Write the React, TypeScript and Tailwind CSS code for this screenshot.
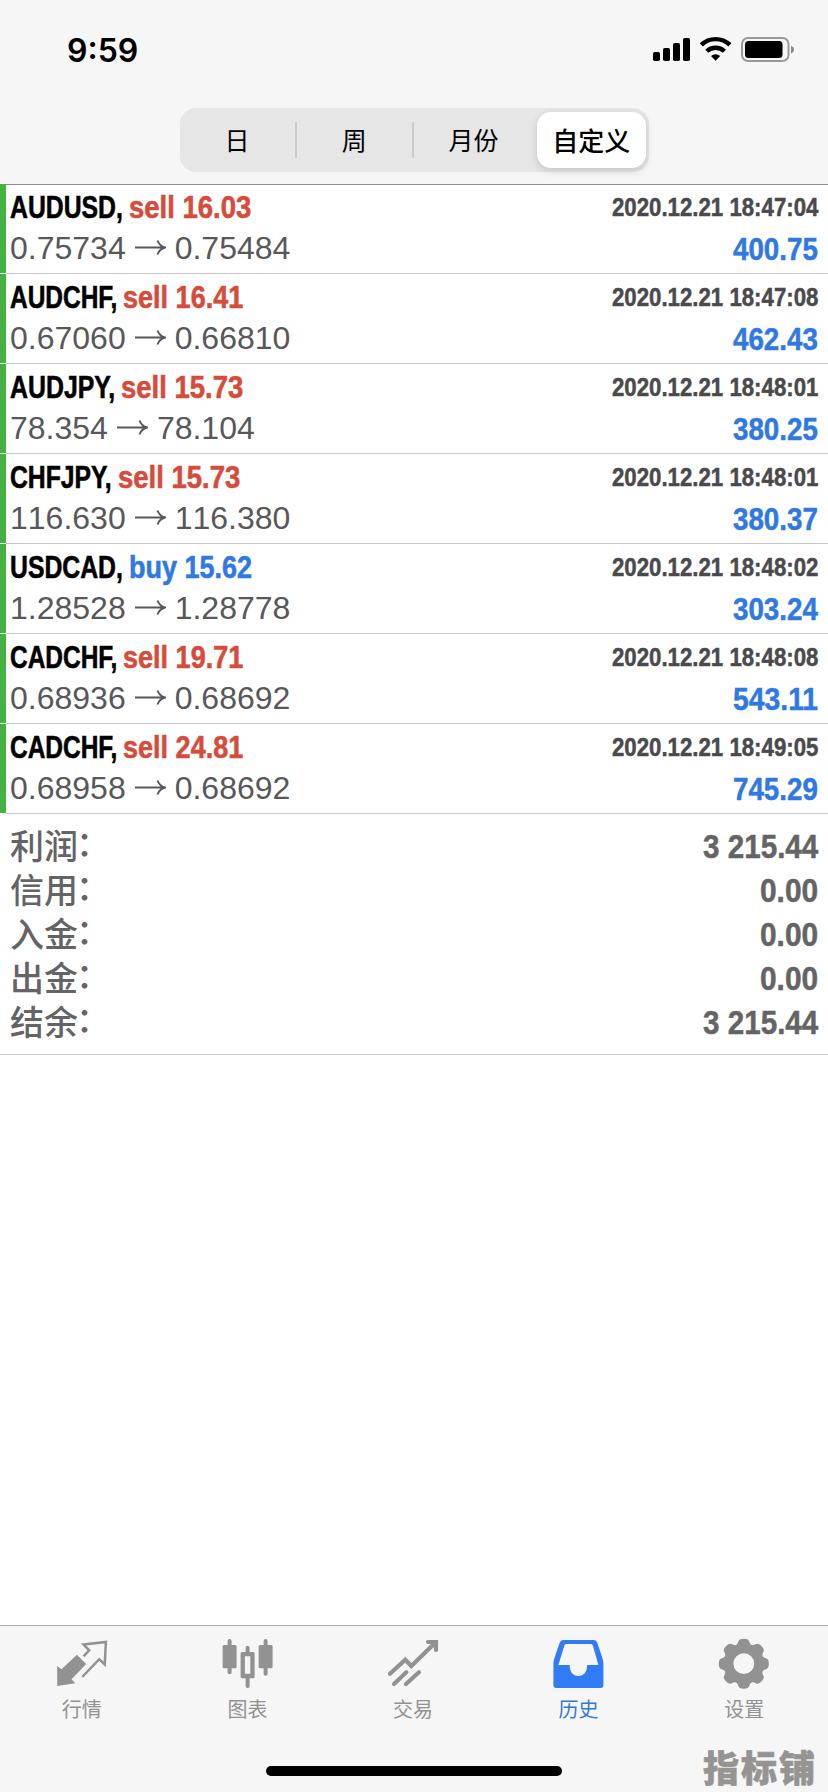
import { useLayoutEffect, useRef, useState } from 'react'
import type { ReactNode } from 'react'

type Deal = {
  symbol: string
  symbolWidth: number
  side: 'sell' | 'buy'
  volume: string
  volumeWidth: number
  open: string
  close: string
  time: string
  profit: string
}

const deals: Deal[] = [
  { symbol: 'AUDUSD', symbolWidth: 113, side: 'sell', volume: '16.03', volumeWidth: 122, open: '0.75734', close: '0.75484', time: '2020.12.21 18:47:04', profit: '400.75' },
  { symbol: 'AUDCHF', symbolWidth: 107, side: 'sell', volume: '16.41', volumeWidth: 120, open: '0.67060', close: '0.66810', time: '2020.12.21 18:47:08', profit: '462.43' },
  { symbol: 'AUDJPY', symbolWidth: 105, side: 'sell', volume: '15.73', volumeWidth: 122, open: '78.354', close: '78.104', time: '2020.12.21 18:48:01', profit: '380.25' },
  { symbol: 'CHFJPY', symbolWidth: 102, side: 'sell', volume: '15.73', volumeWidth: 122, open: '116.630', close: '116.380', time: '2020.12.21 18:48:01', profit: '380.37' },
  { symbol: 'USDCAD', symbolWidth: 113, side: 'buy', volume: '15.62', volumeWidth: 123, open: '1.28528', close: '1.28778', time: '2020.12.21 18:48:02', profit: '303.24' },
  { symbol: 'CADCHF', symbolWidth: 107, side: 'sell', volume: '19.71', volumeWidth: 120, open: '0.68936', close: '0.68692', time: '2020.12.21 18:48:08', profit: '543.11' },
  { symbol: 'CADCHF', symbolWidth: 107, side: 'sell', volume: '24.81', volumeWidth: 120, open: '0.68958', close: '0.68692', time: '2020.12.21 18:49:05', profit: '745.29' },
]

const summary = [
  { label: '利润', value: '3 215.44', width: 115 },
  { label: '信用', value: '0.00', width: 58 },
  { label: '入金', value: '0.00', width: 58 },
  { label: '出金', value: '0.00', width: 58 },
  { label: '结余', value: '3 215.44', width: 115 },
]

// Condenses its text horizontally to the given width
function Condensed({ width, className = '', children }: { width: number; className?: string; children: ReactNode }) {
  const ref = useRef<HTMLSpanElement>(null)
  const [scale, setScale] = useState(1)

  useLayoutEffect(() => {
    if (ref.current) setScale(width / ref.current.offsetWidth)
  }, [width])

  return (
    <span className={`block whitespace-nowrap ${className}`} style={{ width }}>
      <span ref={ref} className="inline-block origin-left" style={{ transform: `scaleX(${scale})` }}>
        {children}
      </span>
    </span>
  )
}

function StatusBar() {
  return (
    <div className="flex h-[108px] items-start justify-between pt-[30px] pr-[32px] pl-[67px]">
      <Condensed width={71} className="font-['Inter'] text-[32px] leading-[41px] font-semibold text-black">
        9:59
      </Condensed>
      <svg width="144" height="40" viewBox="0 0 144 40">
        <g>
          <rect x="1" y="22" width="7" height="9" rx="1.800" />
          <rect x="11" y="18" width="7" height="13" rx="1.800" />
          <rect x="21" y="13" width="7" height="18" rx="1.800" />
          <rect x="31" y="8" width="7" height="23" rx="1.800" />
        </g>
        <g fill="none" stroke="#000" strokeWidth="4.400">
          <path d="M49.300 14.900a20.500 20.500 0 0 1 28.600 0" />
          <path d="M54.800 21.300a12.600 12.600 0 0 1 17.600 0" />
        </g>
        <path d="M63.600 30.800l-4.600-4.700a6.600 6.600 0 0 1 9.200 0z" />
        <rect x="90" y="8" width="46.500" height="23" rx="6" fill="none" stroke="#999" strokeWidth="2" />
        <rect x="93" y="11" width="37.500" height="17" rx="3.500" />
        <path d="M139 15.700c2 .8 3 2.200 3 3.900s-1 3.100-3 3.900z" fill="#888" />
      </svg>
    </div>
  )
}

function PeriodTabs() {
  return (
    <div className="mx-auto grid h-16 w-[469px] grid-cols-4 items-center rounded-[16px] bg-[#e6e6e7] text-center font-['Noto_Sans_CJK_SC',sans-serif] text-[25px] text-black">
      <span className="border-r-2 border-[#cbcbd0] pb-0.5 leading-[34px]">日</span>
      <span className="border-r-2 border-[#cbcbd0] pb-0.5 leading-[34px]">周</span>
      <span className="pb-0.5 pl-0.5 leading-[34px]">月份</span>
      <span className="mr-[3px] ml-[6px] flex h-14 items-center justify-center rounded-[14px] bg-white pb-0.5 text-[26px] font-medium shadow-[0_3px_8px_rgba(0,0,0,0.14)]">
        自定义
      </span>
    </div>
  )
}

function DealRow({ deal }: { deal: Deal }) {
  return (
    <div className="flex h-[90px] font-['Liberation_Sans',sans-serif]">
      <div className="h-[89px] w-1.5 bg-[#45b143]" />
      <div className="flex flex-1 justify-between border-b border-[#c4c6c8] pr-[10px] pl-1">
        <div>
          <div className="flex h-11 gap-[6px] text-[32px] leading-[46px] font-bold [-webkit-text-stroke:0.6px]">
            <Condensed width={deal.symbolWidth} className="text-black">{deal.symbol},</Condensed>
            <Condensed width={deal.volumeWidth} className={deal.side === 'sell' ? 'text-[#d54c3c]' : 'text-[#3079e2]'}>
              {deal.side} {deal.volume}
            </Condensed>
          </div>
          <div className="flex text-[32px] leading-[40px] text-[#58585a] [font-kerning:none]">
            <span>{deal.open}</span>
            <svg width="31" height="40" viewBox="0 0 31 40" fill="none" stroke="#58585a" strokeWidth="2" className="mr-[9px] ml-[9px]">
              <path d="M0 19.500h29.500M22.500 12.500q2 5.500 7.500 7q-5.500 1.500-7.500 7" />
            </svg>
            <span>{deal.close}</span>
          </div>
        </div>
        <div className="flex flex-col items-end font-bold [-webkit-text-stroke:0.5px]">
          <Condensed width={206} className="text-[26px] leading-[46px] text-[#4a4a4c]">{deal.time}</Condensed>
          <Condensed width={85} className="text-[32px] leading-[38px] text-[#3079e2]">{deal.profit}</Condensed>
        </div>
      </div>
    </div>
  )
}

function QuotesIcon() {
  return (
    <svg width="60" height="56" viewBox="0 0 60 56">
      <path d="M4.200 31v20l18-2.700-3.700-4L33.200 29 23.900 19.700 8.500 34.300z" fill="#929292" />
      <path d="M30.500 21.300l5.700-6-5.600-5.800L52.900 7l-1.200 22.500-5.500-5.300L29.200 42" fill="none" stroke="#929292" strokeWidth="2.500" />
    </svg>
  )
}

function ChartIcon() {
  return (
    <svg width="60" height="56" viewBox="0 0 60 56" fill="#929292">
      <rect x="4.600" y="10" width="14" height="23.300" rx="1.500" />
      <rect x="9.600" y="4" width="4" height="35.300" rx="2" />
      <path fillRule="evenodd" d="M24.100 17h11a1.500 1.500 0 0 1 1.500 1.500v23.300a1.500 1.500 0 0 1-1.500 1.500h-11a1.500 1.500 0 0 1-1.500-1.500V18.500a1.500 1.500 0 0 1 1.500-1.500zm2.800 4.300v17.400h5.400V21.300z" />
      <path d="M27.600 18v-5.300a2 2 0 0 1 4 0V18zM27.600 42v9a2 2 0 0 0 4 0v-9z" />
      <rect x="40.600" y="10" width="14" height="23.300" rx="1.500" />
      <rect x="45.600" y="4" width="4" height="36.700" rx="2" />
    </svg>
  )
}

function TradeIcon() {
  return (
    <svg width="60" height="56" viewBox="0 0 60 56" fill="none" stroke="#929292" strokeWidth="4.200" strokeLinecap="round">
      <path d="M6 38.800L21.300 24.700l6 6.300L51 8M44 7H52v8" />
      <path d="M10 49L22.300 37.300M22 49L35 37.300" />
    </svg>
  )
}

function HistoryIcon() {
  return (
    <svg width="60" height="56" viewBox="0 0 60 56" fill="#2f7cf6">
      <path fillRule="evenodd" d="M13.500 5h30c2 0 3.200 1 3.900 2.900l4.700 14.300c.9 2.700 1.300 4.500 1.300 7.300V50a3 3 0 0 1-3 3h-44a3 3 0 0 1-3-3V29.500c0-2.800.4-4.600 1.300-7.300L9.600 7.900C10.300 6 11.500 5 13.500 5zm3.200 4c-1.200 0-2 .6-2.400 1.700L8.400 30h11.300c0 7 3.300 11 8.700 11s8.700-4 8.700-11h11.300L42.900 10.700C42.500 9.600 41.700 9 40.500 9z" />
    </svg>
  )
}

function SettingsIcon() {
  return (
    <svg width="60" height="56" viewBox="0 0 60 56">
      <g fill="#929292" transform="translate(28.800 28.700)">
        {[0, 45, 90, 135, 180, 225, 270, 315].map((angle) => (
          <path key={angle} transform={`rotate(${angle})`} d="M-8-16.500L-8-18.500C-6.500-19.300-5.800-21-5.200-22.800Q-4.400-25 0-25T5.200-22.800C5.800-21 6.500-19.300 8-18.500V-16.500z" />
        ))}
        <circle r="14.700" fill="none" stroke="#929292" strokeWidth="8.600" />
      </g>
    </svg>
  )
}

const tabs = [
  { label: '行情', icon: <QuotesIcon /> },
  { label: '图表', icon: <ChartIcon /> },
  { label: '交易', icon: <TradeIcon /> },
  { label: '历史', icon: <HistoryIcon />, active: true },
  { label: '设置', icon: <SettingsIcon /> },
]

export default function App() {
  return (
    <div className="relative flex h-[1792px] w-[828px] flex-col overflow-hidden bg-white">
      <header className="h-[185px] border-b border-[#8c8c8c] bg-[#f6f6f6]">
        <StatusBar />
        <PeriodTabs />
      </header>

      <main className="-mt-px flex-1">
        {deals.map((deal) => (
          <DealRow key={deal.time + deal.open} deal={deal} />
        ))}
        <div className="h-[241px] border-b border-[#c4c6c8] pt-[9px] pr-[10px] pl-[10px] text-[#646466]">
          {summary.map((item) => (
            <div key={item.label} className="flex h-11 justify-between">
              <span className="flex font-['Noto_Sans_CJK_SC',sans-serif] text-[34px] leading-[44px] font-medium">
                {item.label}
                <span className="-mt-[3px] -ml-[2px]">：</span>
              </span>
              <Condensed width={item.width} className="font-['Liberation_Sans',sans-serif] text-[34px] leading-[46px] font-bold [-webkit-text-stroke:0.5px]">
                {item.value}
              </Condensed>
            </div>
          ))}
        </div>
      </main>

      <footer className="h-[167px] border-t border-[#a9aaaa] bg-[#f6f6f6] pt-[9px]">
        <nav className="grid grid-cols-5">
          {tabs.map((tab) => (
            <div key={tab.label} className={tab.active ? 'flex flex-col items-center text-[#3478d8]' : 'flex flex-col items-center text-[#929292]'}>
              {tab.icon}
              <span className="pt-0.5 pr-0.5 font-['Noto_Sans_CJK_SC',sans-serif] text-[20px] leading-8">{tab.label}</span>
            </div>
          ))}
        </nav>
        <div className="mx-auto mt-[41px] h-[10px] w-[296px] rounded-full bg-black" />
      </footer>

      <div className="absolute right-[11px] bottom-0 font-['Noto_Sans_CJK_SC',sans-serif] text-[36px] leading-[52px] font-black tracking-[2px] text-[#969492] [-webkit-text-stroke:0.6px]">
        指标铺
      </div>
    </div>
  )
}
